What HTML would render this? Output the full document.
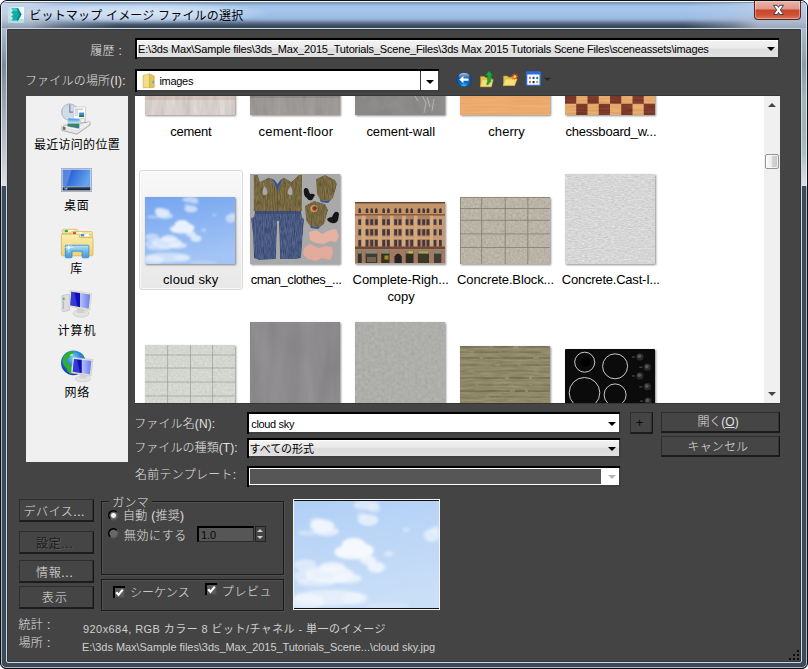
<!DOCTYPE html>
<html lang="ja">
<head>
<meta charset="utf-8">
<title>ビットマップ イメージ ファイルの選択</title>
<style>
*{box-sizing:border-box;margin:0;padding:0}
html,body{width:808px;height:669px;overflow:hidden;background:#fff}
body{position:relative;font-family:"Liberation Sans","Noto Sans CJK JP",sans-serif;font-size:12px;color:#e0e0e0}
.abs{position:absolute}
#frame{position:absolute;left:0;top:0;width:808px;height:669px;border-radius:7px 7px 6px 6px;background:#3c4959;overflow:hidden;border:1px solid #0c1016}
#frame i{position:absolute;display:block}
#titlebg{left:-1px;top:-1px;width:808px;height:30px;background:linear-gradient(180deg,#e8eef4 0,#e8eef4 2px,#7a8ea8 2px,#8eaacc 4px,#a2c4ea 6px,#a5c7ed 9px,#9cbce4 18px,#8ea8cc 20px,#6a80a0 22px,#506078 24px,#3a4a5e 26px,#344454 28px)}
#tl{left:-1px;top:2px;width:130px;height:26px;background:linear-gradient(180deg,#c6d5ea 0,#c0d0e6 10px,#b0bfd4 18px,#98a5b8 23px,#8a96a6 26px);-webkit-mask-image:linear-gradient(90deg,#000 0,#000 30px,rgba(0,0,0,.5) 60px,transparent 120px);mask-image:linear-gradient(90deg,#000 0,#000 30px,rgba(0,0,0,.5) 60px,transparent 120px)}
#tr{left:677px;top:2px;width:130px;height:26px;background:linear-gradient(180deg,#b9cdea 0,#b4c8e4 10px,#acbcd2 18px,#a0aec2 23px,#98a4b6 26px);-webkit-mask-image:linear-gradient(270deg,#000 0,#000 50px,rgba(0,0,0,.5) 75px,transparent 125px);mask-image:linear-gradient(270deg,#000 0,#000 50px,rgba(0,0,0,.5) 75px,transparent 125px)}
#glow{left:18px;top:1px;width:250px;height:22px;background:radial-gradient(ellipse at center,rgba(255,255,255,.6) 0,rgba(255,255,255,.35) 45%,rgba(255,255,255,0) 72%)}
#lside{left:0;top:27px;width:6px;height:158px;background:linear-gradient(180deg,#adbccf 0,#7e8995 38px,#a2aab4 82px,#c0c6cc 122px,#dde0e4 158px)}
#rside{left:800px;top:27px;width:6px;height:158px;background:linear-gradient(180deg,#adbccf 0,#8b9aa4 38px,#9fb6b8 70px,#a4b0b6 100px,#a6c0c0 125px,#c8ced4 140px,#dde0e4 158px)}
#hl{left:0;top:0;width:806px;height:667px;border-radius:6px 6px 5px 5px;border:1px solid rgba(255,255,255,.62)}
#client{left:5px;top:27px;width:796px;height:635px;background:#444;border:1px solid #cfd8e2;box-shadow:inset 0 0 0 1px #30363e;border-radius:2px}
#closeb{left:753px;top:0;width:47px;height:19px;border:1px solid #5e241c;border-top:0;border-radius:0 0 4px 4px;background:linear-gradient(180deg,#eab2a7 0,#e0978a 8px,#c9432b 9px,#cf5236 14px,#d87a5e 18px);box-shadow:inset 0 0 0 1px rgba(255,255,255,.35)}
.t{position:absolute;white-space:nowrap}
.combo{position:absolute;background:#3e3e3e;border:0}
.combo .in{position:absolute;display:block;left:2px;top:2px;right:2px;bottom:2px}
.combo:before{content:"";position:absolute;left:0;top:0;right:1px;height:2px;background:#000}
.combo:after{content:"";position:absolute;left:0;top:0;bottom:0;width:2px;background:#000}
.arr{position:absolute;display:block;width:0;height:0;border-left:4px solid transparent;border-right:4px solid transparent;border-top:4px solid #000}
.btn{position:absolute;background:#454545;border:1px solid #2e2e2e;border-right:1px solid #161616;border-bottom:2px solid #1c1c1c;box-shadow:inset -1px 0 0 #333}
.grp{position:absolute;border:1px solid #1c1c1c;box-shadow:1px 1px 0 #4f4f4f, inset 1px 1px 0 #4f4f4f}
.radio{position:absolute;width:11px;height:11px;border-radius:6px;border:1px solid #1a1a1a;border-right-color:#9a9a9a;border-bottom-color:#9a9a9a}
.radio i{display:block}
.chk{position:absolute;width:12px;height:12px;background:#5a5a5a;box-shadow:inset 2px 2px 0 #000, inset -1px -1px 0 #4b4b4b}
.chk svg{position:absolute;left:0;top:0}
.th{position:absolute;box-shadow:1px 1px 2px rgba(0,0,0,.45)}
#title{left:29.3px;top:5.5px;font:400 12px/20px 'Liberation Sans','Noto Sans CJK JP',sans-serif;letter-spacing:0.19px;color:#000;}
#l_hist{left:90.2px;top:41.1px;font:300 12px/20px 'Liberation Sans','Noto Sans CJK JP',sans-serif;letter-spacing:0.33px;color:#e0e0e0;}
#v_hist{left:138.0px;top:39.2px;font:400 11px/20px 'Liberation Sans','Noto Sans CJK JP',sans-serif;letter-spacing:-0.18px;color:#000;}
#l_look{left:24.9px;top:70.5px;font:300 12px/20px 'Liberation Sans','Noto Sans CJK JP',sans-serif;letter-spacing:0.20px;color:#e0e0e0;}
#v_look{left:159.4px;top:70.8px;font:400 11px/20px 'Liberation Sans','Noto Sans CJK JP',sans-serif;letter-spacing:-0.28px;color:#000;}
#p1{left:34.0px;top:134.5px;font:400 12px/20px 'Liberation Sans','Noto Sans CJK SC',sans-serif;letter-spacing:0.28px;color:#000;}
#p2{left:64.0px;top:196.3px;font:400 12px/20px 'Liberation Sans','Noto Sans CJK SC',sans-serif;letter-spacing:0.80px;color:#000;}
#p3{left:70.2px;top:258.6px;font:400 12px/20px 'Liberation Sans','Noto Sans CJK SC',sans-serif;letter-spacing:1.30px;color:#000;}
#p4{left:57.4px;top:320.8px;font:400 12px/20px 'Liberation Sans','Noto Sans CJK SC',sans-serif;letter-spacing:1.00px;color:#000;}
#p5{left:64.5px;top:382.5px;font:400 12px/20px 'Liberation Sans','Noto Sans CJK SC',sans-serif;letter-spacing:0.70px;color:#000;}
#f11{left:170.3px;top:122.0px;font:400 13px/20px 'Liberation Sans','Noto Sans CJK JP',sans-serif;letter-spacing:-0.28px;color:#000;}
#f12{left:258.5px;top:122.0px;font:400 13px/20px 'Liberation Sans','Noto Sans CJK JP',sans-serif;letter-spacing:0.21px;color:#000;}
#f13{left:366.4px;top:122.0px;font:400 13px/20px 'Liberation Sans','Noto Sans CJK JP',sans-serif;letter-spacing:-0.07px;color:#000;}
#f14{left:488.3px;top:122.0px;font:400 13px/20px 'Liberation Sans','Noto Sans CJK JP',sans-serif;letter-spacing:0.06px;color:#000;}
#f15{left:565.4px;top:122.0px;font:400 13px/20px 'Liberation Sans','Noto Sans CJK JP',sans-serif;letter-spacing:-0.20px;color:#000;}
#f21{left:163.0px;top:270.0px;font:400 13px/20px 'Liberation Sans','Noto Sans CJK JP',sans-serif;letter-spacing:0.12px;color:#000;}
#f22{left:250.7px;top:270.0px;font:400 13px/20px 'Liberation Sans','Noto Sans CJK JP',sans-serif;letter-spacing:-0.47px;color:#000;}
#f23{left:352.6px;top:270.0px;font:400 13px/20px 'Liberation Sans','Noto Sans CJK JP',sans-serif;letter-spacing:-0.09px;color:#000;}
#f23b{left:387.4px;top:286.9px;font:400 13px/20px 'Liberation Sans','Noto Sans CJK JP',sans-serif;letter-spacing:-0.07px;color:#000;}
#f24{left:457.1px;top:270.0px;font:400 13px/20px 'Liberation Sans','Noto Sans CJK JP',sans-serif;letter-spacing:-0.12px;color:#000;}
#f25{left:561.8px;top:270.0px;font:400 13px/20px 'Liberation Sans','Noto Sans CJK JP',sans-serif;letter-spacing:-0.22px;color:#000;}
#l_fname{left:134.2px;top:413.8px;font:300 12px/20px 'Liberation Sans','Noto Sans CJK JP',sans-serif;letter-spacing:0.12px;color:#e0e0e0;}
#l_ftype{left:134.2px;top:438.3px;font:300 12px/20px 'Liberation Sans','Noto Sans CJK JP',sans-serif;letter-spacing:0.08px;color:#e0e0e0;}
#l_tmpl{left:135.0px;top:465.3px;font:300 12px/20px 'Liberation Sans','Noto Sans CJK JP',sans-serif;letter-spacing:0.27px;color:#e0e0e0;}
#v_fname{left:251.3px;top:414.0px;font:400 11px/20px 'Liberation Sans','Noto Sans CJK JP',sans-serif;letter-spacing:-0.34px;color:#000;}
#v_ftype{left:249.5px;top:438.8px;font:400 11px/20px 'Liberation Sans','Noto Sans CJK JP',sans-serif;letter-spacing:-0.06px;color:#000;}
#b_plus{left:635.8px;top:412.7px;font:400 13px/20px 'Liberation Sans','Noto Sans CJK JP',sans-serif;letter-spacing:1.40px;color:#0c0c0c;}
#b_open{left:697.4px;top:411.9px;font:300 12px/20px 'Liberation Sans','Noto Sans CJK JP',sans-serif;letter-spacing:-0.03px;color:#e0e0e0;}
#b_cancel{left:687.6px;top:437.0px;font:300 12px/20px 'Liberation Sans','Noto Sans CJK JP',sans-serif;letter-spacing:0.10px;color:#e0e0e0;}
#b_dev{left:23.6px;top:501.7px;font:300 12px/20px 'Liberation Sans','Noto Sans CJK JP',sans-serif;letter-spacing:0.53px;color:#e0e0e0;}
#b_set{left:36.0px;top:534.0px;font:400 12px/20px 'Liberation Sans','Noto Sans CJK JP',sans-serif;letter-spacing:0.68px;color:#1c1c1c;text-shadow:1px 1px 0 #5c5c5c}
#b_info{left:36.0px;top:562.7px;font:300 12px/20px 'Liberation Sans','Noto Sans CJK JP',sans-serif;letter-spacing:0.68px;color:#e0e0e0;}
#b_show{left:41.7px;top:588.0px;font:300 12px/20px 'Liberation Sans','Noto Sans CJK JP',sans-serif;letter-spacing:1.30px;color:#e0e0e0;}
#g_gamma{left:112.3px;top:493.3px;font:300 12px/20px 'Liberation Sans','Noto Sans CJK JP',sans-serif;letter-spacing:0.25px;color:#e0e0e0;}
#g_auto{left:123.0px;top:506.0px;font:300 12px/20px 'Liberation Sans','Noto Sans CJK JP',sans-serif;letter-spacing:0.27px;color:#e0e0e0;}
#g_dis{left:124.0px;top:525.5px;font:300 12px/20px 'Liberation Sans','Noto Sans CJK JP',sans-serif;letter-spacing:0.55px;color:#e0e0e0;}
#g_val{left:201.0px;top:524.5px;font:400 11px/20px 'Liberation Sans','Noto Sans CJK JP',sans-serif;letter-spacing:-0.10px;color:#080808;}
#g_seq{left:129.9px;top:583.4px;font:300 12px/20px 'Liberation Sans','Noto Sans CJK JP',sans-serif;letter-spacing:0.10px;color:#e0e0e0;}
#g_prev{left:221.8px;top:581.8px;font:300 12px/20px 'Liberation Sans','Noto Sans CJK JP',sans-serif;letter-spacing:0.60px;color:#e0e0e0;}
#s_l1{left:18.4px;top:615.4px;font:300 12px/20px 'Liberation Sans','Noto Sans CJK JP',sans-serif;letter-spacing:0.40px;color:#e0e0e0;}
#s_l2{left:18.4px;top:633.2px;font:300 12px/20px 'Liberation Sans','Noto Sans CJK JP',sans-serif;letter-spacing:0.40px;color:#e0e0e0;}
#s_v1{left:83.0px;top:618.7px;font:400 11px/20px 'Liberation Sans','Noto Sans CJK JP',sans-serif;letter-spacing:0.43px;color:#cfcfcf;}
#s_v2{left:82.0px;top:637.3px;font:400 11px/20px 'Liberation Sans','Noto Sans CJK JP',sans-serif;letter-spacing:-0.05px;color:#cfcfcf;}
</style>
</head>
<body>
<div id="frame">
 <i id="titlebg"></i><i id="tl"></i><i id="tr"></i><i id="glow"></i>
 <i id="lside"></i><i id="rside"></i>
 <i id="hl"></i>
 <i id="client"></i>
 <i id="closeb"><svg width="45" height="18" viewBox="0 0 45 18" style="position:absolute;left:0;top:0"><path d="M18.5 4.3h3.7l1.3 2.1 1.3-2.1h3.7l-3.2 4.6 3.2 4.6h-3.7l-1.3-2.1-1.3 2.1h-3.7l3.2-4.6z" fill="#fff" stroke="#3c4458" stroke-width="1" stroke-linejoin="round"/></svg></i>
 <svg style="position:absolute;left:7px;top:6px" width="16" height="16" viewBox="0 0 16 16"><defs><linearGradient id="ai" x1="0" y1="0" x2="1" y2="0"><stop offset="0" stop-color="#bfe4e0"/><stop offset="1" stop-color="#f2f8f8"/></linearGradient></defs><rect width="16" height="16" fill="url(#ai)"/><rect y="12" width="16" height="4" fill="#a8dcd8" opacity=".8"/><path d="M3.500 1.200H10L13.500 7.400 10 13.600H3.500L5 11 3.200 9.400 5.500 7.400 3.200 5.400 5 3.800z" fill="#14aaa8"/><path d="M3.500 1.200H10L11.500 4H5z" fill="#3cccc4"/><path d="M10 1.200L13.500 7.400 10 13.600 8.500 13.600 11 7.400 8.500 1.200z" fill="#0b868c"/></svg>
 </div>

<!-- combos -->
<div class="combo" id="c_hist" style="left:135px;top:38px;width:645px;height:21px"><i class="in" style="background:linear-gradient(180deg,#f3f3f3 0,#ebebeb 45%,#dddddd 55%,#e2e2e2 100%);box-shadow:inset 1px 1px 0 #fff"></i><b class="arr" style="right:5px;top:9px"></b></div>
<div class="combo" id="c_look" style="left:135px;top:69px;width:305px;height:23px"><i class="in" style="background:#fff"></i><i style="position:absolute;left:285px;top:2px;width:1px;height:19px;background:#3c3c3c"></i><b class="arr" style="right:6px;top:11px"></b>
<svg style="position:absolute;left:6px;top:3px" width="17" height="17.500" viewBox="0 0 16 16"><path d="M2 2.500h5l1.500 1.500H12v10.500H2z" fill="#ecd070"/><path d="M2 14.5V3l6-1.5v13z" fill="#f3dc86" stroke="#c9a93e" stroke-width=".5"/><path d="M8 1.5v13l4.5-.3V3.6L8 1.5z" fill="#e3c25a" stroke="#c9a93e" stroke-width=".5"/><rect x="11" y="8" width="1.2" height="2.5" fill="#3aa0e0"/></svg></div>
<div class="combo" id="c_fname" style="left:247px;top:412px;width:374px;height:22px"><i class="in" style="background:#fff"></i><b class="arr" style="right:5px;top:10px"></b></div>
<div class="combo" id="c_ftype" style="left:247px;top:438px;width:374px;height:20px"><i class="in" style="background:linear-gradient(180deg,#f3f3f3 0,#e9e9e9 45%,#dbdbdb 55%,#e0e0e0 100%);box-shadow:inset 1px 1px 0 #fff"></i><b class="arr" style="right:5px;top:9px"></b></div>
<div class="combo" id="c_tmpl" style="left:247px;top:466px;width:374px;height:21px"><i class="in" style="background:#fff"></i><i style="position:absolute;left:3px;top:3px;width:351px;height:15px;background:#565656"></i><b class="arr" style="right:5px;top:9px;border-top-color:#b4b4b4"></b></div>

<!-- toolbar icons -->
<svg class="abs" style="left:455px;top:70px" width="100" height="20" viewBox="455 70 100 20">
 <defs><radialGradient id="tb1" cx=".5" cy="1" r=".9"><stop offset="0" stop-color="#3ad8f8"/><stop offset=".35" stop-color="#0a6cc8"/><stop offset="1" stop-color="#0c4a9c"/></radialGradient>
 <linearGradient id="tb2" x1="0" y1="0" x2="0" y2="1"><stop offset="0" stop-color="#fff" stop-opacity=".65"/><stop offset="1" stop-color="#fff" stop-opacity="0"/></linearGradient>
 <filter id="ib6"><feGaussianBlur stdDeviation="0.25"/></filter></defs>
 <g filter="url(#ib6)">
 <circle cx="464" cy="79.600" r="7.200" fill="url(#tb1)" stroke="#0a3c80" stroke-width=".6"/>
 <ellipse cx="464" cy="76" rx="5.500" ry="3.200" fill="url(#tb2)"/>
 <path d="M459.200 79.600l4.200-3.600v2.400h5.200v2.400h-5.200v2.400z" fill="#fff"/>
 <!-- up folder -->
 <path d="M480.500 76.500h4l1 1.200h6v8.800h-11z" fill="#e6c24c" stroke="#b8942c" stroke-width=".5"/>
 <path d="M480.300 86.800l1.700-7.200h11.200l-1.800 7.200z" fill="#f7de7a" stroke="#c8a83c" stroke-width=".5"/>
 <path d="M489 71l4 4.600h-2.200v6l-2.600 3h-1.600l1-3.200v-5.800h-2.400z" fill="#1ea838" stroke="#0f7a24" stroke-width=".5"/>
 <!-- new folder -->
 <path d="M503.500 76h4l1 1.200h6.500v8.200h-11.500z" fill="#e6c24c" stroke="#b8942c" stroke-width=".5"/>
 <path d="M503.200 85.600l2-6.600h12l-2.600 6.600z" fill="#f7de7a" stroke="#c8a83c" stroke-width=".5"/>
 <path d="M514.800 72.800l.7 2.100 2-.9-.9 2 2.100.7-2.100.7.900 2-2-.9-.7 2.100-.7-2.100-2 .9.900-2-2.100-.7 2.100-.7-.9-2 2 .9z" fill="#f06018"/>
 <circle cx="514.800" cy="76.700" r="1.300" fill="#ffe060"/>
 <!-- view menu -->
 <rect x="526.600" y="72.200" width="13.600" height="13.200" rx="1" fill="#fff" stroke="#2a6ede" stroke-width="1.400"/>
 <rect x="526" y="71.600" width="14.800" height="3" rx="1" fill="#2a6ede"/>
 <rect x="529" y="76.800" width="2" height="2.200" fill="#8a8ad0"/><rect x="532.600" y="76.800" width="2" height="2.200" fill="#2a4ac0"/><rect x="536.200" y="76.800" width="2" height="2.200" fill="#1e9a40"/>
 <rect x="529" y="81" width="2" height="2.200" fill="#e87030"/><rect x="532.600" y="81" width="2" height="2.200" fill="#102880"/><rect x="536.200" y="81" width="2" height="2.200" fill="#d8a020"/>
 <path d="M543.800 77.800h7l-3.500 3.200z" fill="#262626"/>
 </g>
</svg>


<!-- places bar -->
<div class="abs" id="places" style="left:26px;top:96px;width:102px;height:366px;background:#f0f0f0"></div>
<svg class="abs" style="left:56px;top:98px" width="42" height="40" viewBox="56 98 42 40">
 <defs><filter id="ib1"><feGaussianBlur stdDeviation="0.3"/></filter>
 <linearGradient id="ph1" x1="0" y1="0" x2="0" y2="1"><stop offset="0" stop-color="#2f86e6"/><stop offset=".45" stop-color="#bfe0f8"/><stop offset=".6" stop-color="#3f8a4a"/><stop offset="1" stop-color="#2a6ac8"/></linearGradient></defs>
 <g filter="url(#ib1)">
 <circle cx="69.8" cy="112.1" r="8.2" fill="#d0dbe6" stroke="#a9b6c6" stroke-width="1"/>
 <path d="M69.8 104.5v7.6h4.2" fill="none" stroke="#6f89a8" stroke-width="1.2"/>
 <path d="M73.4 107h12.2v15.5H73.4z" fill="#fcfcfc" stroke="#b8bcc4" stroke-width=".6"/>
 <path d="M74.6 109.2h8.6M74.6 111h3.6M74.6 113h3.6M74.6 115h3.6" stroke="#9aa0a8" stroke-width=".7"/>
 <rect x="79.2" y="112.6" width="4.9" height="4.4" fill="#3a8ad8"/><rect x="79.2" y="115.2" width="4.9" height="1.8" fill="#2f7a3c"/>
 <path d="M80.6 118.5h4v6h-4z" fill="#eee" stroke="#b0b0b0" stroke-width=".5"/>
 <path d="M62 125.6L90 121.8v3.2L77 134.2 62 130.4z" fill="#e6e6e6" stroke="#8e8e8e" stroke-width=".7"/>
 <path d="M62 125.6l15 4 13-7.8" fill="none" stroke="#fff" stroke-width=".8"/>
 <path d="M63 126.5l2.4.6v3l-2.4-.6z" fill="#666"/>
 <path d="M68 118l12 .8-.6 10-12.4-2.2z" fill="url(#ph1)" stroke="#dfe8f0" stroke-width=".5"/>
 </g>
</svg>
<svg class="abs" style="left:60px;top:166px" width="34" height="28" viewBox="60 166 34 28">
 <defs><linearGradient id="dk1" x1="0" y1="0" x2="1" y2="0.3"><stop offset="0" stop-color="#2a5ccc"/><stop offset=".35" stop-color="#2d68d8"/><stop offset="1" stop-color="#62a2ee"/></linearGradient>
 <linearGradient id="dk2" x1="0" y1="0" x2="0" y2="1"><stop offset="0" stop-color="#92a2bc"/><stop offset=".4" stop-color="#33415c"/><stop offset="1" stop-color="#0c1526"/></linearGradient></defs>
 <rect x="61.5" y="168.5" width="30" height="23" fill="#eef1f8" stroke="#a9b1c8" stroke-width="1"/>
 <rect x="62.6" y="169.6" width="27.8" height="16.6" fill="url(#dk1)"/>
 <path d="M62.6 169.6h9l-5 16.6h-4z" fill="#fff" opacity=".22"/>
 <rect x="62.6" y="186.2" width="27.8" height="4.2" fill="url(#dk2)"/>
 <circle cx="65.9" cy="188" r="1.9" fill="#3a8ae0"/><circle cx="65.5" cy="187.6" r=".7" fill="#e04030"/><circle cx="66.5" cy="188.5" r=".7" fill="#e8c030"/><circle cx="66.4" cy="187.5" r=".6" fill="#40b040"/>
</svg>
<svg class="abs" style="left:58px;top:226px" width="38" height="34" viewBox="58 226 38 34">
 <defs><linearGradient id="lb1" x1="0" y1="0" x2="0" y2="1"><stop offset="0" stop-color="#fbeeb4"/><stop offset="1" stop-color="#f1d36c"/></linearGradient>
 <linearGradient id="lb2" x1="0" y1="0" x2="0" y2="1"><stop offset="0" stop-color="#b8e4f6"/><stop offset=".5" stop-color="#6db8ea"/><stop offset="1" stop-color="#4a96d8"/></linearGradient>
 <filter id="ib3"><feGaussianBlur stdDeviation="0.25"/></filter></defs>
 <g filter="url(#ib3)">
 <path d="M62.4 233.6v-3.4l1-1h13.5l1 1v3.4z" fill="#f6e3a0" stroke="#d6b65e" stroke-width=".7"/>
 <rect x="64.8" y="230.1" width="3.1" height="2" fill="#18b428"/><rect x="68.2" y="230.1" width="5" height="2" fill="#fff"/>
 <path d="M70.6 235.4v-3l1-.9h19.8l1 .9v3z" fill="#f6e3a0" stroke="#d6b65e" stroke-width=".7"/>
 <rect x="73" y="232.2" width="2.9" height="1.9" fill="#d83020"/><rect x="76.2" y="232.2" width="6" height="1.6" fill="#fff"/>
 <path d="M61.4 234.2h17.8l1.4 3.4h11.8l.6.8v16.6l-.8.8H62.2l-.8-.8z" fill="url(#lb1)" stroke="#d4b458" stroke-width=".8"/>
 <path d="M79.2 237.4l.8-2.6h11.6l.8.8v2z" fill="#f6e3a0" stroke="#d6b65e" stroke-width=".7"/>
 <rect x="81" y="234.2" width="3.1" height="2" fill="#1a90f0"/><rect x="84.4" y="234.2" width="4.6" height="2" fill="#fff"/>
 <path d="M65.3 246.2q0-1 1-1h21.6q1 0 1 1v10.6q0 1-1 1h-4.8q-1 0-1-1v-5.6H72v5.6q0 1-1 1h-4.7q-1 0-1-1z" fill="url(#lb2)" stroke="#2a8cdc" stroke-width=".8"/>
 <path d="M68.8 242.5v10M64.5 247.6h9M66.5 250l5-5" stroke="#fff" stroke-width=".6" opacity=".9"/>
 <circle cx="68.8" cy="247.6" r="1.3" fill="#fff"/>
 </g>
</svg>
<svg class="abs" style="left:58px;top:288px" width="38" height="34" viewBox="58 288 38 34">
 <defs><linearGradient id="cm1" x1="0" y1="0" x2="1" y2="0"><stop offset="0" stop-color="#1818c8"/><stop offset=".48" stop-color="#0c0cb8"/><stop offset=".5" stop-color="#b4c0f8"/><stop offset="1" stop-color="#6a7cf0"/></linearGradient>
 <filter id="ib4"><feGaussianBlur stdDeviation="0.3"/></filter></defs>
 <g filter="url(#ib4)">
 <ellipse cx="81" cy="313.4" rx="8" ry="3.8" fill="#e2e2e2" stroke="#c4c4c4" stroke-width=".6"/>
 <path d="M77.5 307h6l1 6h-8z" fill="#d0d0d0"/>
 <path d="M62 295.6l6-1.4 1.5 1v15l-6.5 1.6-1-1z" fill="#dcdce2" stroke="#b4b4bc" stroke-width=".6"/>
 <rect x="62.8" y="297.6" width="1.8" height="2.4" fill="#38c820"/><path d="M63.6 301v8" stroke="#a8a8b8" stroke-width=".8"/>
 <path d="M70.2 290.3L91.5 293.4 89.8 310.4 68.8 306.2z" fill="#ebe6d2" stroke="#cfc8ac" stroke-width=".5"/>
 <path d="M71.3 291.8L90.2 294.5 88.7 308.8 70.2 305.2z" fill="url(#cm1)"/>
 <path d="M71.3 291.8l3 .4 3 14-7-1z" fill="#5a6ae8" opacity=".45"/>
 </g>
</svg>
<svg class="abs" style="left:58px;top:348px" width="38" height="36" viewBox="58 348 38 36">
 <defs><radialGradient id="nw1" cx=".5" cy=".3" r=".7"><stop offset="0" stop-color="#6edcf4"/><stop offset=".45" stop-color="#2a7ae0"/><stop offset="1" stop-color="#1438b0"/></radialGradient>
 <linearGradient id="nw2" x1="0" y1="0" x2="1" y2="0"><stop offset="0" stop-color="#1818c8"/><stop offset=".46" stop-color="#0c0cb8"/><stop offset=".5" stop-color="#b4c0f8"/><stop offset="1" stop-color="#6a7cf0"/></linearGradient>
 <filter id="ib5"><feGaussianBlur stdDeviation="0.3"/></filter></defs>
 <g filter="url(#ib5)">
 <circle cx="73.4" cy="362.8" r="12.4" fill="url(#nw1)"/>
 <path d="M66 353.5q4-3 8-2.5l-1 3q-3 .5-4 3.5l-2 1q-1 2 1 4.500l2 2q1 3-1 5-5-3-6.500-8 0-5 3.500-8.500z" fill="#2fb22c"/>
 <path d="M67.500 367q2-2 5-1.500l1 4-2 4.500q-3-1-4.500-3.500z" fill="#2fb22c"/>
 <path d="M81 353q2 1.500 3 3.500l-1.500.5z" fill="#2fb22c"/>
 <path d="M70 354.500q2-1 3.500-.5l-.5 1.500q-2 1-3 0z" fill="#d8f080" opacity=".8"/>
 <ellipse cx="83" cy="378.800" rx="7.600" ry="3" fill="#e4e4e4" stroke="#c8c8c8" stroke-width=".6"/>
 <path d="M80 374h6l.8 4.500h-7.600z" fill="#d4d4d4"/>
 <path d="M72.800 357.400L92.800 359.500 91 376 71.300 373z" fill="#e8e8e8" stroke="#bdbdbd" stroke-width=".6"/>
 <path d="M74 358.900L91.400 360.700 89.900 374.400 72.700 371.800z" fill="url(#nw2)"/>
 <path d="M74 358.900l3 .3 3 13.600-7.300-1z" fill="#5a6ae8" opacity=".45"/>
 </g>
</svg>


<!-- file list -->
<div class="abs" id="list" style="left:135px;top:96px;width:629px;height:307px;background:#fff;overflow:hidden">
<div class="abs" id="sel" style="left:4px;top:74px;width:104px;height:120px;border:1px solid #d9d9d9;border-radius:3px;background:linear-gradient(180deg,#f8f8f8,#e8e8e8);box-shadow:inset 0 0 0 1px rgba(255,255,255,.6)"></div>
<svg class="th" style="left:10px;top:-71px" width="90" height="90" viewBox="0 0 90 90" ><defs><filter id="t11" x="0" y="0" width="100%" height="100%" color-interpolation-filters="sRGB"><feTurbulence type="fractalNoise" baseFrequency="0.2 0.03" numOctaves="3" seed="11" result="n"/><feColorMatrix in="n" type="matrix" values="1 0 0 0 0  1 0 0 0 0  1 0 0 0 0  0 0 0 0 1" result="g"/><feComposite in="SourceGraphic" in2="g" operator="arithmetic" k1="0" k2="1" k3="0.143" k4="-0.072" result="c"/><feComposite in="c" in2="SourceGraphic" operator="in"/></filter></defs><g filter="url(#t11)"><rect width="90" height="90" fill="#d8d0cc"/><rect y="70" width="90" height="5" fill="#c4b0a6" opacity=".5"/></g></svg>
<svg class="th" style="left:115px;top:-71px" width="90" height="90" viewBox="0 0 90 90" ><defs><filter id="t12" x="0" y="0" width="100%" height="100%" color-interpolation-filters="sRGB"><feTurbulence type="fractalNoise" baseFrequency="0.15 0.03" numOctaves="3" seed="12" result="n"/><feColorMatrix in="n" type="matrix" values="1 0 0 0 0  1 0 0 0 0  1 0 0 0 0  0 0 0 0 1" result="g"/><feComposite in="SourceGraphic" in2="g" operator="arithmetic" k1="0" k2="1" k3="0.088" k4="-0.044" result="c"/><feComposite in="c" in2="SourceGraphic" operator="in"/></filter></defs><g filter="url(#t12)"><rect width="90" height="90" fill="#9c9896"/><rect y="70" width="90" height="3" fill="#807c7a" opacity=".5"/></g></svg>
<svg class="th" style="left:220px;top:-71px" width="90" height="90" viewBox="0 0 90 90" ><defs><filter id="t13" x="0" y="0" width="100%" height="100%" color-interpolation-filters="sRGB"><feTurbulence type="fractalNoise" baseFrequency="0.06" numOctaves="3" seed="13" result="n"/><feColorMatrix in="n" type="matrix" values="1 0 0 0 0  1 0 0 0 0  1 0 0 0 0  0 0 0 0 1" result="g"/><feComposite in="SourceGraphic" in2="g" operator="arithmetic" k1="0" k2="1" k3="0.088" k4="-0.044" result="c"/><feComposite in="c" in2="SourceGraphic" operator="in"/></filter></defs><g filter="url(#t13)"><rect width="90" height="90" fill="#8c8a88"/><path d="M67 70 L71 78 L69 88 M72 72 L75 82 M79 74 L77 86 M60 71 L63 76" stroke="#d0d0d0" stroke-width="1.100" fill="none" opacity=".55"/></g></svg>
<svg class="th" style="left:325px;top:-71px" width="90" height="90" viewBox="0 0 90 90" ><defs><filter id="t14" x="0" y="0" width="100%" height="100%" color-interpolation-filters="sRGB"><feTurbulence type="fractalNoise" baseFrequency="0.02 0.5" numOctaves="2" seed="14" result="n"/><feColorMatrix in="n" type="matrix" values="1 0 0 0 0  1 0 0 0 0  1 0 0 0 0  0 0 0 0 1" result="g"/><feComposite in="SourceGraphic" in2="g" operator="arithmetic" k1="0" k2="1" k3="0.088" k4="-0.044" result="c"/><feComposite in="c" in2="SourceGraphic" operator="in"/></filter></defs><g filter="url(#t14)"><rect width="90" height="90" fill="#ecaa6c"/></g></svg>
<svg class="th" style="left:430px;top:-71px" width="90" height="90" viewBox="0 0 90 90" ><defs><filter id="chn" x="0" y="0" width="100%" height="100%" color-interpolation-filters="sRGB"><feTurbulence type="fractalNoise" baseFrequency="0.05 0.6" numOctaves="2" seed="5" result="n"/><feColorMatrix in="n" type="matrix" values="1 0 0 0 0  1 0 0 0 0  1 0 0 0 0  0 0 0 0 1" result="g"/><feComposite in="SourceGraphic" in2="g" operator="arithmetic" k1="0" k2="1" k3="0.132" k4="-0.066" result="c"/><feComposite in="c" in2="SourceGraphic" operator="in"/></filter></defs><g filter="url(#chn)"><rect width="90" height="90" fill="#e6a96c"/><rect x="0.00" y="0.00" width="11.25" height="11.25" fill="#7c3a2a"/><rect x="22.50" y="0.00" width="11.25" height="11.25" fill="#7c3a2a"/><rect x="45.00" y="0.00" width="11.25" height="11.25" fill="#7c3a2a"/><rect x="67.50" y="0.00" width="11.25" height="11.25" fill="#7c3a2a"/><rect x="11.25" y="11.25" width="11.25" height="11.25" fill="#7c3a2a"/><rect x="33.75" y="11.25" width="11.25" height="11.25" fill="#7c3a2a"/><rect x="56.25" y="11.25" width="11.25" height="11.25" fill="#7c3a2a"/><rect x="78.75" y="11.25" width="11.25" height="11.25" fill="#7c3a2a"/><rect x="0.00" y="22.50" width="11.25" height="11.25" fill="#7c3a2a"/><rect x="22.50" y="22.50" width="11.25" height="11.25" fill="#7c3a2a"/><rect x="45.00" y="22.50" width="11.25" height="11.25" fill="#7c3a2a"/><rect x="67.50" y="22.50" width="11.25" height="11.25" fill="#7c3a2a"/><rect x="11.25" y="33.75" width="11.25" height="11.25" fill="#7c3a2a"/><rect x="33.75" y="33.75" width="11.25" height="11.25" fill="#7c3a2a"/><rect x="56.25" y="33.75" width="11.25" height="11.25" fill="#7c3a2a"/><rect x="78.75" y="33.75" width="11.25" height="11.25" fill="#7c3a2a"/><rect x="0.00" y="45.00" width="11.25" height="11.25" fill="#7c3a2a"/><rect x="22.50" y="45.00" width="11.25" height="11.25" fill="#7c3a2a"/><rect x="45.00" y="45.00" width="11.25" height="11.25" fill="#7c3a2a"/><rect x="67.50" y="45.00" width="11.25" height="11.25" fill="#7c3a2a"/><rect x="11.25" y="56.25" width="11.25" height="11.25" fill="#7c3a2a"/><rect x="33.75" y="56.25" width="11.25" height="11.25" fill="#7c3a2a"/><rect x="56.25" y="56.25" width="11.25" height="11.25" fill="#7c3a2a"/><rect x="78.75" y="56.25" width="11.25" height="11.25" fill="#7c3a2a"/><rect x="0.00" y="67.50" width="11.25" height="11.25" fill="#7c3a2a"/><rect x="22.50" y="67.50" width="11.25" height="11.25" fill="#7c3a2a"/><rect x="45.00" y="67.50" width="11.25" height="11.25" fill="#7c3a2a"/><rect x="67.50" y="67.50" width="11.25" height="11.25" fill="#7c3a2a"/><rect x="11.25" y="78.75" width="11.25" height="11.25" fill="#7c3a2a"/><rect x="33.75" y="78.75" width="11.25" height="11.25" fill="#7c3a2a"/><rect x="56.25" y="78.75" width="11.25" height="11.25" fill="#7c3a2a"/><rect x="78.75" y="78.75" width="11.25" height="11.25" fill="#7c3a2a"/></g></svg>
<svg class="th" style="left:10px;top:101px" width="90" height="67" viewBox="0 0 90 67" ><defs><linearGradient id="c1g" x1="0" y1="0" x2="0.25" y2="1"><stop offset="0" stop-color="#74a5f1"/><stop offset="1" stop-color="#a3c4f4"/></linearGradient><filter id="c1b" x="-20%" y="-20%" width="140%" height="140%"><feGaussianBlur stdDeviation="1.15"/></filter></defs><rect width="90" height="67" fill="url(#c1g)"/><g filter="url(#c1b)" fill="#fff" opacity="0.82"><ellipse cx="17.5" cy="15.5" rx="7.5" ry="4" opacity="0.85"/><ellipse cx="20" cy="19" rx="8" ry="3" opacity="0.7"/><ellipse cx="8" cy="20" rx="6" ry="1.6" opacity="0.45"/><ellipse cx="14" cy="13" rx="4" ry="2.5" opacity="0.6"/><ellipse cx="45" cy="2.5" rx="8" ry="3" opacity="0.6"/><ellipse cx="50" cy="5" rx="4" ry="2" opacity="0.45"/><ellipse cx="46" cy="12" rx="6.5" ry="3.6" opacity="0.7"/><ellipse cx="42" cy="9" rx="3" ry="2" opacity="0.4"/><ellipse cx="85.5" cy="21.5" rx="5" ry="4.2" opacity="0.6"/><ellipse cx="88" cy="18" rx="3" ry="2.5" opacity="0.45"/><ellipse cx="69.5" cy="18" rx="2.2" ry="1.4" opacity="0.4"/><ellipse cx="37" cy="28" rx="7.5" ry="5" opacity="1"/><ellipse cx="31" cy="32" rx="6" ry="3.6" opacity="0.95"/><ellipse cx="43" cy="31" rx="6.5" ry="4.2" opacity="1"/><ellipse cx="37" cy="33.5" rx="10" ry="3" opacity="0.95"/><ellipse cx="51" cy="41.5" rx="5.5" ry="3.4" opacity="0.8"/><ellipse cx="46" cy="37" rx="5" ry="3" opacity="0.8"/><ellipse cx="58.8" cy="33" rx="2.6" ry="1.6" opacity="0.55"/><ellipse cx="7" cy="40" rx="7" ry="3.6" opacity="0.55"/><ellipse cx="22" cy="46" rx="15" ry="5.5" opacity="0.75"/><ellipse cx="33" cy="48.5" rx="9" ry="3.2" opacity="0.7"/><ellipse cx="24" cy="41.5" rx="8" ry="3.5" opacity="0.75"/><ellipse cx="6" cy="47" rx="6" ry="4" opacity="0.5"/><ellipse cx="14" cy="51" rx="12" ry="2.5" opacity="0.5"/><ellipse cx="22" cy="60.5" rx="22" ry="5" opacity="0.6"/><ellipse cx="8" cy="63" rx="11" ry="4.5" opacity="0.6"/><ellipse cx="38" cy="61" rx="8" ry="4" opacity="0.45"/><ellipse cx="58" cy="65.5" rx="14" ry="2" opacity="0.25"/></g></svg>
<svg class="th" style="left:115px;top:78px" width="90" height="90" viewBox="0 0 90 90" ><defs><filter id="cmn" x="0" y="0" width="100%" height="100%" color-interpolation-filters="sRGB"><feTurbulence type="fractalNoise" baseFrequency="0.9 0.15" numOctaves="2" seed="3" result="n"/><feColorMatrix in="n" type="matrix" values="1 0 0 0 0  1 0 0 0 0  1 0 0 0 0  0 0 0 0 1" result="g"/><feComposite in="SourceGraphic" in2="g" operator="arithmetic" k1="0" k2="1" k3="0.242" k4="-0.121" result="c"/><feComposite in="c" in2="SourceGraphic" operator="in"/></filter><filter id="cmb"><feGaussianBlur stdDeviation="0.35"/></filter></defs><rect width="90" height="90" fill="#a9a9a9"/><g filter="url(#cmb)"><g filter="url(#cmn)"><path d="M3.700 1 L7.600 1 L10 8 L19 3.500 L24 9 L27.500 17 L31 9 L33.500 3.500 L41.500 8 L48.800 1 L52 1 L52 37 L3.700 37 Z" fill="#756740"/></g><path d="M20 4 L24 9 L27.500 17.500 L31 9 L33 4 L30.500 6 L27.500 10 L24.500 6 Z" fill="#3e5283"/><path d="M14.500 12 Q11.500 17 13 20.500 Q16 22.500 17.500 18.500 Q17 15 14.500 12Z" fill="#a9a9a9"/><path d="M40.500 12 Q43.500 17 42 20.500 Q39 22.500 37.500 18.500 Q38 15 40.500 12Z" fill="#a9a9a9"/><path d="M27.500 17 L27.500 37" stroke="#5e5034" stroke-width="0.800"/><g filter="url(#cmn)"><path d="M5 37 L51 37 L52 43 L54 45 L51 84 L46 85 L30 85 L29 47 L27 47 L26 85 L9 86 L4 84 L3 60 L1 44 L4 43 Z" fill="#485881"/></g><path d="M5 37 L51 37 L51 40 L5 40Z" fill="#3d4a70" opacity=".7"/><g filter="url(#cmn)"><path d="M66 5 L75 1 L85 6 L87 10 L83 24 L80 27 L70 26 L67 20 Z" fill="#756740"/></g><path d="M70 26 L80 27 L78 29 L71 28Z" fill="#3e5283"/><path d="M54 15 Q56 13 58 15 L60 20 Q63 19 65 21 L62 26 Q58 27 57 24 Q53 22 54 15Z" fill="#141414"/><g filter="url(#cmn)"><path d="M55 32 L64 27 L75 30 L78 36 L74 50 L70 53 L60 52 L56 46 Z" fill="#756740"/></g><circle cx="64" cy="34.5" r="3.6" fill="#d8a23a"/><circle cx="64.5" cy="34.5" r="2.4" fill="#b03a3a"/><circle cx="65" cy="34" r="1.5" fill="#3a3f7a"/><path d="M60 52 L70 53 L68 55 L61 54Z" fill="#3e5283"/><path d="M85 38 Q88 37 89 40 L88 46 Q86 50 82 49 Q78 48 77 45 Q79 43 82 43 Q83 40 85 38Z" fill="#141414"/><path d="M59 58 L66 56 L72 60 L80 56 L86 55 L89 62 L86 68 L80 67 L74 70 L66 69 L60 66 Z" fill="#e6b3a3"/><path d="M54 74 L60 70 L68 74 L76 72 L82 73 L83 80 L80 86 L72 84 L66 87 L58 85 L53 80 Z" fill="#e2ab9b"/></g></svg>
<svg class="th" style="left:220px;top:106px" width="90" height="62" viewBox="0 0 90 62" ><defs><filter id="bdb"><feGaussianBlur stdDeviation="0.45"/></filter></defs><rect width="90" height="62" fill="#c59a72"/><g filter="url(#bdb)"><rect width="90" height="12.500" fill="#c29468"/><rect width="90" height="1.400" fill="#65432f"/><rect y="12" width="90" height="1.700" fill="#8c5c40"/><rect x="10.6" y="13.700" width="12.2" height="31" fill="#b28462"/><rect x="10.6" y="24" width="12.2" height="2.700" fill="#cfa47a"/><rect x="10.6" y="34.5" width="12.2" height="2.700" fill="#cfa47a"/><rect x="26.7" y="13.700" width="8.3" height="31" fill="#b28462"/><rect x="26.7" y="24" width="8.3" height="2.700" fill="#cfa47a"/><rect x="26.7" y="34.5" width="8.3" height="2.700" fill="#cfa47a"/><rect x="38.5" y="13.700" width="8.7" height="31" fill="#b28462"/><rect x="38.5" y="24" width="8.7" height="2.700" fill="#cfa47a"/><rect x="38.5" y="34.5" width="8.7" height="2.700" fill="#cfa47a"/><rect x="50.7" y="13.700" width="8.3" height="31" fill="#b28462"/><rect x="50.7" y="24" width="8.3" height="2.700" fill="#cfa47a"/><rect x="50.7" y="34.5" width="8.3" height="2.700" fill="#cfa47a"/><rect x="62.5" y="13.700" width="12.5" height="31" fill="#b28462"/><rect x="62.5" y="24" width="12.5" height="2.700" fill="#cfa47a"/><rect x="62.5" y="34.5" width="12.5" height="2.700" fill="#cfa47a"/><rect x="6.7" y="13.700" width="3.9" height="31" fill="#d3aa80"/><rect x="22.8" y="13.700" width="3.9" height="31" fill="#d3aa80"/><rect x="35" y="13.700" width="3.5" height="31" fill="#d3aa80"/><rect x="47.2" y="13.700" width="3.5" height="31" fill="#d3aa80"/><rect x="59" y="13.700" width="3.5" height="31" fill="#d3aa80"/><rect x="75" y="13.700" width="3.0" height="31" fill="#d3aa80"/><rect y="44.500" width="90" height="2.800" fill="#70493a"/><rect y="47.300" width="90" height="14.700" fill="#a27a62"/><path d="M3.4 11.100 V7.400 Q4.7 4.400 6.0 7.400 V11.100Z" fill="#43363a"/><rect x="3.3" y="17.3" width="2.800" height="5.6" fill="#44373d"/><rect x="3.3" y="27.3" width="2.800" height="6.1" fill="#44373d"/><rect x="3.3" y="37.9" width="2.800" height="6.6" fill="#44373d"/><path d="M10.7 11.100 V7.400 Q12 4.400 13.3 7.400 V11.100Z" fill="#43363a"/><rect x="10.6" y="17.3" width="2.800" height="5.6" fill="#44373d"/><rect x="10.6" y="27.3" width="2.800" height="6.1" fill="#44373d"/><rect x="10.6" y="37.9" width="2.800" height="6.6" fill="#44373d"/><path d="M15.4 11.100 V7.400 Q16.7 4.400 18.0 7.400 V11.100Z" fill="#43363a"/><rect x="15.3" y="17.3" width="2.800" height="5.6" fill="#44373d"/><rect x="15.3" y="27.3" width="2.800" height="6.1" fill="#44373d"/><rect x="15.3" y="37.9" width="2.800" height="6.6" fill="#44373d"/><path d="M20.0 11.100 V7.400 Q21.3 4.400 22.6 7.400 V11.100Z" fill="#43363a"/><rect x="19.9" y="17.3" width="2.800" height="5.6" fill="#44373d"/><rect x="19.9" y="27.3" width="2.800" height="6.1" fill="#44373d"/><rect x="19.9" y="37.9" width="2.800" height="6.6" fill="#44373d"/><path d="M27.4 11.100 V7.400 Q28.7 4.400 30.0 7.400 V11.100Z" fill="#43363a"/><rect x="27.3" y="17.3" width="2.800" height="5.6" fill="#44373d"/><rect x="27.3" y="27.3" width="2.800" height="6.1" fill="#44373d"/><rect x="27.3" y="37.9" width="2.800" height="6.6" fill="#44373d"/><path d="M32.1 11.100 V7.400 Q33.4 4.400 34.7 7.400 V11.100Z" fill="#43363a"/><rect x="32.0" y="17.3" width="2.800" height="5.6" fill="#44373d"/><rect x="32.0" y="27.3" width="2.800" height="6.1" fill="#44373d"/><rect x="32.0" y="37.9" width="2.800" height="6.6" fill="#44373d"/><path d="M39.3 11.100 V7.400 Q40.6 4.400 41.9 7.400 V11.100Z" fill="#43363a"/><rect x="39.2" y="17.3" width="2.800" height="5.6" fill="#44373d"/><rect x="39.2" y="27.3" width="2.800" height="6.1" fill="#44373d"/><rect x="39.2" y="37.9" width="2.800" height="6.6" fill="#44373d"/><path d="M43.7 11.100 V7.400 Q45 4.400 46.3 7.400 V11.100Z" fill="#43363a"/><rect x="43.6" y="17.3" width="2.800" height="5.6" fill="#44373d"/><rect x="43.6" y="27.3" width="2.800" height="6.1" fill="#44373d"/><rect x="43.6" y="37.9" width="2.800" height="6.6" fill="#44373d"/><path d="M50.7 11.100 V7.400 Q52 4.400 53.3 7.400 V11.100Z" fill="#43363a"/><rect x="50.6" y="17.3" width="2.800" height="5.6" fill="#44373d"/><rect x="50.6" y="27.3" width="2.800" height="6.1" fill="#44373d"/><rect x="50.6" y="37.9" width="2.800" height="6.6" fill="#44373d"/><path d="M55.4 11.100 V7.400 Q56.7 4.400 58.0 7.400 V11.100Z" fill="#43363a"/><rect x="55.3" y="17.3" width="2.800" height="5.6" fill="#44373d"/><rect x="55.3" y="27.3" width="2.800" height="6.1" fill="#44373d"/><rect x="55.3" y="37.9" width="2.800" height="6.6" fill="#44373d"/><path d="M62.7 11.100 V7.400 Q64 4.400 65.3 7.400 V11.100Z" fill="#43363a"/><rect x="62.6" y="17.3" width="2.800" height="5.6" fill="#44373d"/><rect x="62.6" y="27.3" width="2.800" height="6.1" fill="#44373d"/><rect x="62.6" y="37.9" width="2.800" height="6.6" fill="#44373d"/><path d="M67.4 11.100 V7.400 Q68.7 4.400 70.0 7.400 V11.100Z" fill="#43363a"/><rect x="67.3" y="17.3" width="2.800" height="5.6" fill="#44373d"/><rect x="67.3" y="27.3" width="2.800" height="6.1" fill="#44373d"/><rect x="67.3" y="37.9" width="2.800" height="6.6" fill="#44373d"/><path d="M71.7 11.100 V7.400 Q73 4.400 74.3 7.400 V11.100Z" fill="#43363a"/><rect x="71.6" y="17.3" width="2.800" height="5.6" fill="#44373d"/><rect x="71.6" y="27.3" width="2.800" height="6.1" fill="#44373d"/><rect x="71.6" y="37.9" width="2.800" height="6.6" fill="#44373d"/><path d="M78.7 11.100 V7.400 Q80 4.400 81.3 7.400 V11.100Z" fill="#43363a"/><rect x="78.6" y="17.3" width="2.800" height="5.6" fill="#44373d"/><rect x="78.6" y="27.3" width="2.800" height="6.1" fill="#44373d"/><rect x="78.6" y="37.9" width="2.800" height="6.6" fill="#44373d"/><path d="M84.1 11.100 V7.400 Q85.4 4.400 86.7 7.400 V11.100Z" fill="#43363a"/><rect x="84.0" y="17.3" width="2.800" height="5.6" fill="#44373d"/><rect x="84.0" y="27.3" width="2.800" height="6.1" fill="#44373d"/><rect x="84.0" y="37.9" width="2.800" height="6.6" fill="#44373d"/><rect x="2.8" y="49" width="3.9" height="12" fill="#34302a"/><rect x="2.8" y="49" width="3.9" height="2.600" fill="#8c9c86" opacity=".85"/><rect x="10.6" y="49" width="11.7" height="12" fill="#3e3a30"/><rect x="10.6" y="49" width="11.7" height="2.600" fill="#8c9c86" opacity=".85"/><rect x="26.2" y="49" width="8.3" height="12" fill="#38321f"/><rect x="26.2" y="49" width="8.3" height="2.600" fill="#8c9c86" opacity=".85"/><rect x="50.7" y="49" width="7.8" height="12" fill="#2f2f24"/><rect x="50.7" y="49" width="7.8" height="2.600" fill="#8c9c86" opacity=".85"/><rect x="62.9" y="49" width="11.1" height="12" fill="#3a3826"/><rect x="62.9" y="49" width="11.1" height="2.600" fill="#8c9c86" opacity=".85"/><rect x="79" y="49" width="7.3" height="12" fill="#3c3a32"/><rect x="79" y="49" width="7.3" height="2.600" fill="#8c9c86" opacity=".85"/><rect x="29.500" y="53.500" width="4" height="4" fill="#c8b030" opacity=".7"/><rect x="53.500" y="49.300" width="4.500" height="2" fill="#d8c030" opacity=".9"/><rect x="64" y="49.500" width="9" height="1.800" fill="#c8b838" opacity=".6"/><rect x="12" y="55" width="9" height="5" fill="#8a7460" opacity=".7"/><path d="M39.500 61.500 V54.500 Q43.100 48.500 46.800 54.500 V61.500Z" fill="#2c2022"/><rect y="61" width="90" height="1" fill="#b8b0a8" opacity=".8"/></g></svg>
<svg class="th" style="left:325px;top:101px" width="90" height="67" viewBox="0 0 90 67" ><defs><filter id="t24" x="0" y="0" width="100%" height="100%" color-interpolation-filters="sRGB"><feTurbulence type="fractalNoise" baseFrequency="0.45" numOctaves="3" seed="24" result="n"/><feColorMatrix in="n" type="matrix" values="1 0 0 0 0  1 0 0 0 0  1 0 0 0 0  0 0 0 0 1" result="g"/><feComposite in="SourceGraphic" in2="g" operator="arithmetic" k1="0" k2="1" k3="0.143" k4="-0.072" result="c"/><feComposite in="c" in2="SourceGraphic" operator="in"/></filter><filter id="t24b"><feGaussianBlur stdDeviation="0.3"/></filter></defs><g filter="url(#t24)"><rect width="90" height="67" fill="#bab4a6"/></g><g filter="url(#t24b)" stroke="#7b7364" stroke-width="0.8" opacity=".85"><path d="M0.4 0V67"/><path d="M21.7 0V67"/><path d="M45.2 0V67"/><path d="M67.8 0V67"/><path d="M0 0.4H90"/><path d="M0 11.5H90"/><path d="M0 23.3H90"/><path d="M0 36.9H90"/><path d="M0 50.5H90"/></g></svg>
<svg class="th" style="left:430px;top:78px" width="90" height="90" viewBox="0 0 90 90" ><defs><filter id="t25" x="0" y="0" width="100%" height="100%" color-interpolation-filters="sRGB"><feTurbulence type="fractalNoise" baseFrequency="0.3 0.9" numOctaves="2" seed="25" result="n"/><feColorMatrix in="n" type="matrix" values="1 0 0 0 0  1 0 0 0 0  1 0 0 0 0  0 0 0 0 1" result="g"/><feComposite in="SourceGraphic" in2="g" operator="arithmetic" k1="0" k2="1" k3="0.176" k4="-0.088" result="c"/><feComposite in="c" in2="SourceGraphic" operator="in"/></filter></defs><g filter="url(#t25)"><rect width="90" height="90" fill="#d6d6d6"/></g></svg>
<svg class="th" style="left:10px;top:249px" width="90" height="67" viewBox="0 0 90 67" ><defs><filter id="t31" x="0" y="0" width="100%" height="100%" color-interpolation-filters="sRGB"><feTurbulence type="fractalNoise" baseFrequency="0.45" numOctaves="3" seed="31" result="n"/><feColorMatrix in="n" type="matrix" values="1 0 0 0 0  1 0 0 0 0  1 0 0 0 0  0 0 0 0 1" result="g"/><feComposite in="SourceGraphic" in2="g" operator="arithmetic" k1="0" k2="1" k3="0.110" k4="-0.055" result="c"/><feComposite in="c" in2="SourceGraphic" operator="in"/></filter><filter id="t31b"><feGaussianBlur stdDeviation="0.3"/></filter></defs><g filter="url(#t31)"><rect width="90" height="67" fill="#d4d6d0"/></g><g filter="url(#t31b)" stroke="#85877f" stroke-width="0.6" opacity=".85"><path d="M22.6 0V67"/><path d="M45.5 0V67"/><path d="M67.6 0V67"/><path d="M0 10H90"/><path d="M0 23H90"/><path d="M0 37H90"/><path d="M0 51H90"/></g></svg>
<svg class="th" style="left:115px;top:226px" width="90" height="90" viewBox="0 0 90 90" ><defs><filter id="t32" x="0" y="0" width="100%" height="100%" color-interpolation-filters="sRGB"><feTurbulence type="fractalNoise" baseFrequency="0.06 0.012" numOctaves="3" seed="32" result="n"/><feColorMatrix in="n" type="matrix" values="1 0 0 0 0  1 0 0 0 0  1 0 0 0 0  0 0 0 0 1" result="g"/><feComposite in="SourceGraphic" in2="g" operator="arithmetic" k1="0" k2="1" k3="0.099" k4="-0.050" result="c"/><feComposite in="c" in2="SourceGraphic" operator="in"/></filter></defs><g filter="url(#t32)"><rect width="90" height="90" fill="#8d8b8d"/></g></svg>
<svg class="th" style="left:220px;top:226px" width="90" height="90" viewBox="0 0 90 90" ><defs><filter id="t33" x="0" y="0" width="100%" height="100%" color-interpolation-filters="sRGB"><feTurbulence type="fractalNoise" baseFrequency="0.3" numOctaves="3" seed="33" result="n"/><feColorMatrix in="n" type="matrix" values="1 0 0 0 0  1 0 0 0 0  1 0 0 0 0  0 0 0 0 1" result="g"/><feComposite in="SourceGraphic" in2="g" operator="arithmetic" k1="0" k2="1" k3="0.088" k4="-0.044" result="c"/><feComposite in="c" in2="SourceGraphic" operator="in"/></filter></defs><g filter="url(#t33)"><rect width="90" height="90" fill="#aeaeab"/></g></svg>
<svg class="th" style="left:325px;top:250px" width="90" height="67" viewBox="0 0 90 67" ><defs><filter id="t34" x="0" y="0" width="100%" height="100%" color-interpolation-filters="sRGB"><feTurbulence type="fractalNoise" baseFrequency="0.06 0.5" numOctaves="3" seed="34" result="n"/><feColorMatrix in="n" type="matrix" values="1 0 0 0 0  1 0 0 0 0  1 0 0 0 0  0 0 0 0 1" result="g"/><feComposite in="SourceGraphic" in2="g" operator="arithmetic" k1="0" k2="1" k3="0.143" k4="-0.072" result="c"/><feComposite in="c" in2="SourceGraphic" operator="in"/></filter></defs><g filter="url(#t34)"><rect width="90" height="67" fill="#908a6a"/><path d="M0 1H90" stroke="#4e4a30" stroke-width="1" opacity="0.5" stroke-dasharray="30 3 20 5"/><path d="M0 6H90" stroke="#4e4a30" stroke-width="0.7" opacity="0.6" stroke-dasharray="10 4 25 2 40"/><path d="M0 12H90" stroke="#4e4a30" stroke-width="0.8" opacity="0.7" stroke-dasharray="20 3 50 6"/><path d="M0 19H90" stroke="#4e4a30" stroke-width="0.7" opacity="0.6" stroke-dasharray="35 5 18 3"/><path d="M0 25H90" stroke="#4e4a30" stroke-width="0.6" opacity="0.5" stroke-dasharray="8 6 60 4"/><path d="M0 32H90" stroke="#4e4a30" stroke-width="0.9" opacity="0.7" stroke-dasharray="45 4 20 3"/><path d="M0 39H90" stroke="#4e4a30" stroke-width="0.6" opacity="0.5" stroke-dasharray="15 3 30 6"/><path d="M0 45H90" stroke="#4e4a30" stroke-width="0.9" opacity="0.8" stroke-dasharray="50 5 10 3 30"/><path d="M0 51H90" stroke="#4e4a30" stroke-width="0.6" opacity="0.5" stroke-dasharray="25 4 60"/></g></svg>
<svg class="th" style="left:430px;top:253px" width="90" height="62" viewBox="0 0 90 62" ><defs><filter id="ckb"><feGaussianBlur stdDeviation="0.25"/></filter></defs><rect width="90" height="62" rx="1" fill="#0b0b0b"/><g filter="url(#ckb)" fill="none" stroke="#dcdcdc" stroke-width="0.900"><circle cx="19.7" cy="13.2" r="10"/><circle cx="50.1" cy="17.3" r="12.5"/><circle cx="19.5" cy="43.8" r="15.3"/><circle cx="50.1" cy="45.9" r="11"/></g><circle cx="20.5" cy="13" r="5" fill="#000"/><g filter="url(#ckb)"><circle cx="74.9" cy="7.8" r="3.600" fill="#2c2c2c"/><circle cx="74.4" cy="7.2" r="1.800" fill="#585858"/><rect x="66.9" y="7.3" width="3" height="1.300" fill="#444"/><circle cx="82.4" cy="18.2" r="3.600" fill="#2c2c2c"/><circle cx="81.9" cy="17.599999999999998" r="1.800" fill="#585858"/><rect x="74.4" y="17.7" width="3" height="1.300" fill="#444"/><circle cx="74.9" cy="26.8" r="3.600" fill="#2c2c2c"/><circle cx="74.4" cy="26.2" r="1.800" fill="#585858"/><rect x="66.9" y="26.3" width="3" height="1.300" fill="#444"/><circle cx="82.4" cy="37.7" r="3.600" fill="#2c2c2c"/><circle cx="81.9" cy="37.1" r="1.800" fill="#585858"/><rect x="74.4" y="37.2" width="3" height="1.300" fill="#444"/><circle cx="83" cy="52" r="3.600" fill="#2c2c2c"/><circle cx="82.5" cy="51.4" r="1.800" fill="#585858"/><rect x="75" y="51.5" width="3" height="1.300" fill="#444"/></g></svg>
</div>
<div class="abs" style="left:135px;top:95px;width:645px;height:1px;background:#363636"></div>
<div class="abs" style="left:135px;top:403px;width:645px;height:1px;background:#363636"></div>
<!-- scrollbar -->
<div class="abs" id="sb" style="left:764px;top:96px;width:16px;height:307px;background:#f0f0f0">
 <div class="abs" style="left:4px;top:7px;width:0;height:0;border-left:4px solid transparent;border-right:4px solid transparent;border-bottom:4px solid #444"></div>
 <div class="abs" style="left:4px;top:296px;width:0;height:0;border-left:4px solid transparent;border-right:4px solid transparent;border-top:4px solid #444"></div>
 <div class="abs" style="left:1px;top:58px;width:14px;height:15px;border:1px solid #959595;border-radius:2px;background:linear-gradient(90deg,#fafafa,#ededed 45%,#d2d2d2 55%,#c8c8c8);box-shadow:inset 0 0 0 1px rgba(255,255,255,.7)"></div>
</div>

<!-- buttons -->
<div class="btn" style="left:630px;top:412px;width:23px;height:22px"></div>
<div class="btn" style="left:661px;top:412px;width:119px;height:21px"></div>
<div class="btn" style="left:661px;top:436px;width:119px;height:21px"></div>
<div class="btn" style="left:19px;top:499px;width:75px;height:23px"></div>
<div class="btn" style="left:19px;top:531px;width:75px;height:23px"></div>
<div class="btn" style="left:19px;top:560px;width:75px;height:23px"></div>
<div class="btn" style="left:19px;top:586px;width:75px;height:23px"></div>

<!-- gamma group -->
<div class="grp" style="left:101px;top:501px;width:183px;height:74px"></div>
<div class="abs" style="left:109px;top:498px;width:43px;height:8px;background:#444"></div>
<svg class="abs" style="left:108px;top:510px" width="11" height="11" viewBox="0 0 12 12"><circle cx="6" cy="6" r="4.600" fill="#686868"/><path d="M2.300 9.400A5 5 0 0 1 9.400 2.300" stroke="#000" stroke-width="1.700" fill="none"/><path d="M10 3A5 5 0 0 1 3 10" stroke="#545454" stroke-width="1.100" fill="none"/><circle cx="6" cy="6" r="2.700" fill="#fff"/><circle cx="6" cy="6" r="1.200" fill="#e4e4e4"/></svg>
<svg class="abs" style="left:108px;top:528px" width="11" height="11" viewBox="0 0 12 12"><circle cx="6" cy="6" r="4.600" fill="#686868"/><path d="M2.300 9.400A5 5 0 0 1 9.400 2.300" stroke="#000" stroke-width="1.700" fill="none"/><path d="M10 3A5 5 0 0 1 3 10" stroke="#545454" stroke-width="1.100" fill="none"/></svg>
<div class="abs" id="spin" style="left:197px;top:526px;width:57px;height:16px;background:#565656;border:2px solid #000;border-right:1px solid #2a2a2a;border-bottom:1px solid #2a2a2a"></div>
<div class="abs" style="left:255px;top:526px;width:11px;height:16px;background:#444;border:1px solid #222"><i style="position:absolute;left:1px;top:2px;border-left:3px solid transparent;border-right:3px solid transparent;border-bottom:3px solid #d0d0d0"></i><i style="position:absolute;left:1px;top:9px;border-left:3px solid transparent;border-right:3px solid transparent;border-top:3px solid #d0d0d0"></i></div>

<!-- sequence group -->
<div class="grp" style="left:101px;top:579px;width:183px;height:32px"></div>
<div class="chk" style="left:113px;top:586px"><svg width="12" height="12" viewBox="0 0 12 12"><path d="M3.200 6.200l2.300 2.700L9.800 3.600" fill="none" stroke="#fff" stroke-width="2.200"/></svg></div>
<div class="chk" style="left:205px;top:583px"><svg width="12" height="12" viewBox="0 0 12 12"><path d="M3.200 6.200l2.300 2.700L9.800 3.600" fill="none" stroke="#fff" stroke-width="2.200"/></svg></div>

<!-- preview -->
<div class="abs" id="prev" style="left:293px;top:499px;width:147px;height:111px;background:#111;border:1px solid #f4f4f4;overflow:hidden"><svg style="position:absolute;left:0;top:1px" width="145" height="107" viewBox="0 0 90 67" preserveAspectRatio="none"><defs><linearGradient id="c2g" x1="0" y1="0" x2="0.25" y2="1"><stop offset="0" stop-color="#b1cff6"/><stop offset="1" stop-color="#c9def7"/></linearGradient><filter id="c2b" x="-20%" y="-20%" width="140%" height="140%"><feGaussianBlur stdDeviation="1.15"/></filter></defs><rect width="90" height="67" fill="url(#c2g)"/><g filter="url(#c2b)" fill="#fff" opacity="0.85"><ellipse cx="17.5" cy="15.5" rx="7.5" ry="4" opacity="0.85"/><ellipse cx="20" cy="19" rx="8" ry="3" opacity="0.7"/><ellipse cx="8" cy="20" rx="6" ry="1.6" opacity="0.45"/><ellipse cx="14" cy="13" rx="4" ry="2.5" opacity="0.6"/><ellipse cx="45" cy="2.5" rx="8" ry="3" opacity="0.6"/><ellipse cx="50" cy="5" rx="4" ry="2" opacity="0.45"/><ellipse cx="46" cy="12" rx="6.5" ry="3.6" opacity="0.7"/><ellipse cx="42" cy="9" rx="3" ry="2" opacity="0.4"/><ellipse cx="85.5" cy="21.5" rx="5" ry="4.2" opacity="0.6"/><ellipse cx="88" cy="18" rx="3" ry="2.5" opacity="0.45"/><ellipse cx="69.5" cy="18" rx="2.2" ry="1.4" opacity="0.4"/><ellipse cx="37" cy="28" rx="7.5" ry="5" opacity="1"/><ellipse cx="31" cy="32" rx="6" ry="3.6" opacity="0.95"/><ellipse cx="43" cy="31" rx="6.5" ry="4.2" opacity="1"/><ellipse cx="37" cy="33.5" rx="10" ry="3" opacity="0.95"/><ellipse cx="51" cy="41.5" rx="5.5" ry="3.4" opacity="0.8"/><ellipse cx="46" cy="37" rx="5" ry="3" opacity="0.8"/><ellipse cx="58.8" cy="33" rx="2.6" ry="1.6" opacity="0.55"/><ellipse cx="7" cy="40" rx="7" ry="3.6" opacity="0.55"/><ellipse cx="22" cy="46" rx="15" ry="5.5" opacity="0.75"/><ellipse cx="33" cy="48.5" rx="9" ry="3.2" opacity="0.7"/><ellipse cx="24" cy="41.5" rx="8" ry="3.5" opacity="0.75"/><ellipse cx="6" cy="47" rx="6" ry="4" opacity="0.5"/><ellipse cx="14" cy="51" rx="12" ry="2.5" opacity="0.5"/><ellipse cx="22" cy="60.5" rx="22" ry="5" opacity="0.6"/><ellipse cx="8" cy="63" rx="11" ry="4.5" opacity="0.6"/><ellipse cx="38" cy="61" rx="8" ry="4" opacity="0.45"/><ellipse cx="58" cy="65.5" rx="14" ry="2" opacity="0.25"/></g></svg></div>

<!-- resize grip -->
<svg class="abs" style="left:788px;top:649px" width="12" height="12" viewBox="0 0 12 12" fill="#0c0c0c"><rect x="9" y="1" width="2" height="2"/><rect x="5" y="5" width="2" height="2"/><rect x="9" y="5" width="2" height="2"/><rect x="1" y="9" width="2" height="2"/><rect x="5" y="9" width="2" height="2"/><rect x="9" y="9" width="2" height="2"/></svg>

<!-- all text -->
<span class="t" id="title">ビットマップ イメージ ファイルの選択</span>
<span class="t" id="l_hist">履歴 :</span>
<span class="t" id="v_hist">E:\3ds Max\Sample files\3ds_Max_2015_Tutorials_Scene_Files\3ds Max 2015 Tutorials Scene Files\sceneassets\images</span>
<span class="t" id="l_look">ファイルの場所(I):</span>
<span class="t" id="v_look">images</span>
<span class="t" id="p1">最近访问的位置</span>
<span class="t" id="p2">桌面</span>
<span class="t" id="p3">库</span>
<span class="t" id="p4">计算机</span>
<span class="t" id="p5">网络</span>
<span class="t" id="f11">cement</span>
<span class="t" id="f12">cement-floor</span>
<span class="t" id="f13">cement-wall</span>
<span class="t" id="f14">cherry</span>
<span class="t" id="f15">chessboard_w...</span>
<span class="t" id="f21">cloud sky</span>
<span class="t" id="f22">cman_clothes_...</span>
<span class="t" id="f23">Complete-Righ...</span>
<span class="t" id="f23b">copy</span>
<span class="t" id="f24">Concrete.Block...</span>
<span class="t" id="f25">Concrete.Cast-I...</span>
<span class="t" id="l_fname">ファイル名(N):</span>
<span class="t" id="l_ftype">ファイルの種類(T):</span>
<span class="t" id="l_tmpl">名前テンプレート:</span>
<span class="t" id="v_fname">cloud sky</span>
<span class="t" id="v_ftype">すべての形式</span>
<span class="t" id="b_plus">+</span>
<span class="t" id="b_open">開く(<u>O</u>)</span>
<span class="t" id="b_cancel">キャンセル</span>
<span class="t" id="b_dev">デバイス...</span>
<span class="t" id="b_set">設定...</span>
<span class="t" id="b_info">情報...</span>
<span class="t" id="b_show">表示</span>
<span class="t" id="g_gamma">ガンマ</span>
<span class="t" id="g_auto">自動 (推奨)</span>
<span class="t" id="g_dis">無効にする</span>
<span class="t" id="g_val">1.0</span>
<span class="t" id="g_seq">シーケンス</span>
<span class="t" id="g_prev">プレビュ</span>
<span class="t" id="s_l1">統計 :</span>
<span class="t" id="s_l2">場所 :</span>
<span class="t" id="s_v1">920x684, RGB カラー 8 ビット/チャネル - 単一のイメージ</span>
<span class="t" id="s_v2">E:\3ds Max\Sample files\3ds_Max_2015_Tutorials_Scene...\cloud sky.jpg</span>
</body>
</html>
